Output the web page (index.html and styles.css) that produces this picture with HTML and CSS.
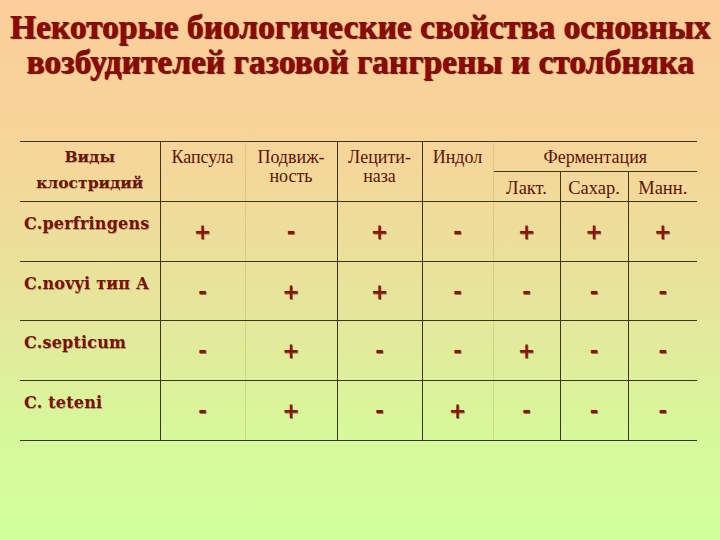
FILE: index.html
```html
<!DOCTYPE html>
<html lang="ru">
<head>
<meta charset="utf-8">
<link rel="stylesheet" href="styles.css">
</head>
<body>
<div class="slide">
  <h1 class="title"><span class="tl">Некоторые биологические свойства основных</span><span class="tl">возбудителей газовой гангрены и столбняка</span></h1>
  <table class="grid">
    <colgroup>
      <col class="c1"><col class="c2"><col class="c3"><col class="c4"><col class="c5"><col class="c6"><col class="c7"><col class="c8">
    </colgroup>
    <tr class="h1">
      <th rowspan="2" class="species-h">Виды<br>клостридий</th>
      <th rowspan="2" class="hd faint-r">Капсула</th>
      <th rowspan="2" class="hd">Подвиж-<br>ность</th>
      <th rowspan="2" class="hd">Лецити-<br>наза</th>
      <th rowspan="2" class="hd faint-r">Индол</th>
      <th colspan="3" class="hd ferm">Ферментация</th>
    </tr>
    <tr class="h2">
      <th class="sub">Лакт.</th>
      <th class="sub">Сахар.</th>
      <th class="sub">Манн.</th>
    </tr>
    <tr class="r">
      <td class="sp">C.perfringens</td>
      <td class="v faint-r">+</td><td class="v">-</td><td class="v">+</td><td class="v faint-r">-</td><td class="v">+</td><td class="v">+</td><td class="v">+</td>
    </tr>
    <tr class="r">
      <td class="sp">C.novyi тип А</td>
      <td class="v faint-r">-</td><td class="v">+</td><td class="v">+</td><td class="v faint-r">-</td><td class="v">-</td><td class="v">-</td><td class="v">-</td>
    </tr>
    <tr class="r">
      <td class="sp">C.septicum</td>
      <td class="v faint-r">-</td><td class="v">+</td><td class="v">-</td><td class="v faint-r">-</td><td class="v">+</td><td class="v">-</td><td class="v">-</td>
    </tr>
    <tr class="r last">
      <td class="sp">C. teteni</td>
      <td class="v faint-r">-</td><td class="v">+</td><td class="v">-</td><td class="v faint-r">+</td><td class="v">-</td><td class="v">-</td><td class="v">-</td>
    </tr>
  </table>
</div>
</body>
</html>
```
FILE: styles.css
```css
html, body {
  margin: 0;
  padding: 0;
}
body {
  width: 720px;
  height: 540px;
  overflow: hidden;
  background: linear-gradient(180deg, #fccd9a 0%, #f7d49a 25%, #e7e49b 55%, #d7f89c 80%, #d2ff9c 100%);
  font-family: "Liberation Serif", serif;
}
.slide {
  width: 720px;
  height: 540px;
  padding-top: 9px;
  box-sizing: border-box;
}
.title {
  margin: 0;
  font-family: "Liberation Serif", serif;
  font-weight: bold;
  font-size: 33.5px;
  line-height: 35px;
  color: #8a0a0a;
  text-align: center;
  text-shadow: 1px 1px 1px #4a1010;
  display: flex;
  flex-direction: column;
  align-items: center;
}
.tl {
  display: block;
  white-space: nowrap;
}
.grid {
  margin: 62px 0 0 20px;
  border-collapse: collapse;
  table-layout: fixed;
  width: 677px;
  color: #5c1408;
}
.c1 { width: 140px; }
.c2 { width: 85px; }
.c3 { width: 92px; }
.c4 { width: 85px; }
.c5 { width: 71px; }
.c6 { width: 67px; }
.c7 { width: 68px; }
.c8 { width: 69px; }
.grid th, .grid td {
  padding: 0;
  border-top: 1px solid #3e3616;
  border-bottom: 1px solid #3e3616;
  border-left: none;
  border-right: 1px solid #3e3616;
}
.grid tr > *:last-child { border-right: none; }
.grid .faint-r { border-right-color: rgba(140, 125, 50, 0.2); }
.h1 { height: 30px; }
.h2 { height: 30px; }
.species-h {
  font-family: "DejaVu Serif", serif;
  font-weight: bold;
  font-size: 15.5px;
  line-height: 26px;
  color: #6a1608;
  vertical-align: top;
  padding-top: 2px !important;
  text-shadow: 0.5px 0.5px 0.5px rgba(60, 20, 0, 0.3);
}
.hd {
  font-weight: normal;
  font-size: 18px;
  line-height: 19px;
  vertical-align: top;
  padding-top: 6px !important;
  color: #5c1408;
}
.sub {
  font-weight: normal;
  font-size: 18.5px;
  line-height: 20px;
  vertical-align: middle;
  padding-top: 2px !important;
  color: #5c1408;
}
.r { height: 59.5px; }
.last { height: 60px; }
.sp {
  font-family: "DejaVu Serif", serif;
  font-weight: bold;
  font-size: 16px;
  line-height: 19px;
  color: #7a1008;
  vertical-align: top;
  padding: 12px 0 0 4px !important;
  white-space: nowrap;
  letter-spacing: 0.2px;
  text-shadow: 0.5px 0.5px 0.5px rgba(60, 20, 0, 0.35);
}
.v {
  font-family: "DejaVu Sans", sans-serif;
  font-weight: bold;
  font-size: 21px;
  color: #8a1408;
  text-align: center;
  vertical-align: middle;
  padding-top: 2px !important;
  text-shadow: 0.5px 0.5px 0.5px rgba(40, 10, 0, 0.5);
}
```
